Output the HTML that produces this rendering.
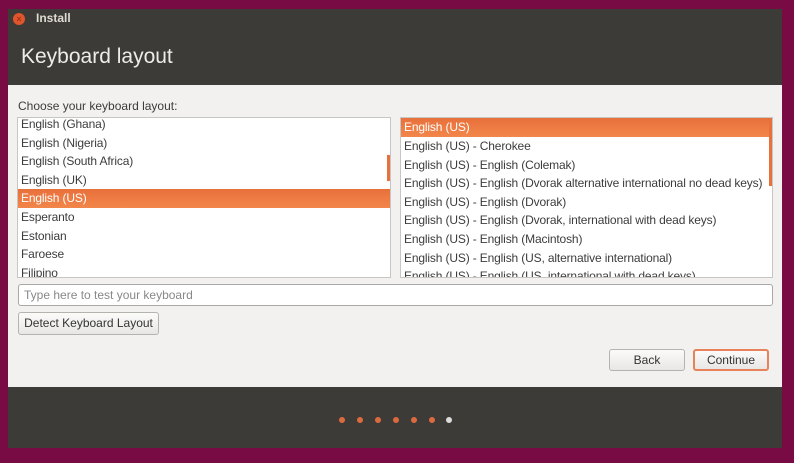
<!DOCTYPE html>
<html><head><style>
*{margin:0;padding:0;box-sizing:border-box}
body{width:794px;height:463px;background:#780a44;font-family:"Liberation Sans",sans-serif;position:relative;overflow:hidden;font-size:12px;color:#3c3c3c}
.a{position:absolute}
.win{left:8px;top:9px;width:774px;height:439px;background:#f2f1f0}
.head{left:8px;top:9px;width:774px;height:76px;background:#3c3b37}
.foot{left:8px;top:387px;width:774px;height:61px;background:#3c3b37}
.list{background:#fff;border:1px solid #c8c6c2;overflow:hidden;letter-spacing:-0.15px}
.row{height:18.6px;line-height:18.6px;padding-left:3px;white-space:nowrap}
.sel{background:linear-gradient(#e8703b,#f2864a);color:#fff}
.btn{border:1px solid #b5b3ae;border-radius:3px;background:linear-gradient(#fbfbfa,#e8e7e5);text-align:center;line-height:20px;color:#333}
.dot{width:6px;height:6px;border-radius:3px;background:#dd6a3e;top:417px}
</style></head><body>
<div class="a win"></div>
<div class="a head"></div>
<div class="a" style="left:13px;top:13px;width:12px;height:12px;border-radius:6px;background:#e0552c;color:#a83316;font-size:9px;line-height:12px;text-align:center;font-weight:bold">×</div>
<div class="a" style="left:36px;top:11px;color:#dfdbd2;font-weight:bold;font-size:12px">Install</div>
<div class="a" style="left:21px;top:45px;color:#efece6;font-size:21px">Keyboard layout</div>
<div class="a" style="left:18px;top:99px;font-size:12px">Choose your keyboard layout:</div>
<div class="a list" style="left:17px;top:117px;width:374px;height:161px">
<div style="margin-top:-3px">
<div class="row">English (Ghana)</div>
<div class="row">English (Nigeria)</div>
<div class="row">English (South Africa)</div>
<div class="row">English (UK)</div>
<div class="row sel">English (US)</div>
<div class="row">Esperanto</div>
<div class="row">Estonian</div>
<div class="row">Faroese</div>
<div class="row">Filipino</div>
</div></div>
<div class="a" style="left:387px;top:155px;width:3px;height:26px;background:#e8703b"></div>
<div class="a list" style="left:400px;top:117px;width:373px;height:161px">
<div class="row sel" style="height:19px">English (US)</div>
<div class="row">English (US) - Cherokee</div>
<div class="row">English (US) - English (Colemak)</div>
<div class="row">English (US) - English (Dvorak alternative international no dead keys)</div>
<div class="row">English (US) - English (Dvorak)</div>
<div class="row">English (US) - English (Dvorak, international with dead keys)</div>
<div class="row">English (US) - English (Macintosh)</div>
<div class="row">English (US) - English (US, alternative international)</div>
<div class="row">English (US) - English (US, international with dead keys)</div>
</div>
<div class="a" style="left:769px;top:118px;width:3px;height:68px;background:#e8703b"></div>
<div class="a" style="left:18px;top:284px;width:755px;height:22px;background:#fff;border:1px solid #aaa8a4;border-radius:3px;color:#888;line-height:20px;padding-left:5px">Type here to test your keyboard</div>
<div class="a btn" style="left:18px;top:312px;width:141px;height:23px">Detect Keyboard Layout</div>
<div class="a btn" style="left:609px;top:349px;width:76px;height:22px">Back</div>
<div class="a btn" style="left:693px;top:349px;width:76px;height:22px;border:2px solid #e8825a;line-height:18px">Continue</div>
<div class="a foot"></div>
<div class="a dot" style="left:339px"></div>
<div class="a dot" style="left:357px"></div>
<div class="a dot" style="left:375px"></div>
<div class="a dot" style="left:393px"></div>
<div class="a dot" style="left:411px"></div>
<div class="a dot" style="left:429px"></div>
<div class="a dot" style="left:446px;background:#dcdcdc"></div>
</body></html>
